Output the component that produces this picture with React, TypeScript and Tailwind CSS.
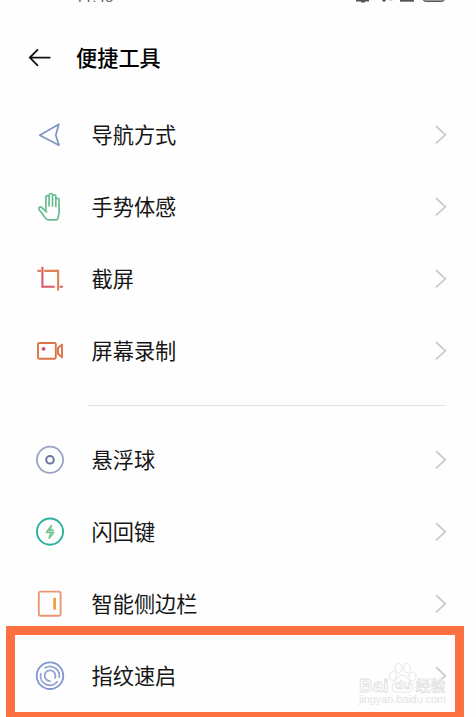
import type { ReactNode } from 'react';

interface Item {
  label: string;
  icon: ReactNode;
}

function NavigationIcon() {
  return (
    <svg className="h-8 w-8" viewBox="0 0 32 32" fill="none" stroke="#8496c6" strokeWidth="1.8" strokeLinejoin="round">
      <path d="M5.8 16.2 24.8 5.2 21.8 16.2 25 26.2Z" />
    </svg>
  );
}

function HandIcon() {
  return (
    <svg className="h-8 w-8" viewBox="0 0 32 32" fill="none" stroke="#67bd90" strokeWidth="1.7" strokeLinecap="round" strokeLinejoin="round">
      <path d="M11.9 20V6.3a1.6 1.6 0 0 1 3.2 0V15M15.1 15V4.2a1.7 1.7 0 0 1 3.4 0V15M18.5 15V5.4a1.6 1.6 0 0 1 3.3 0V15.5M21.8 15.5V9a1.6 1.6 0 0 1 3.3 0V21.5L24 27.2c-.3 1.2-.9 1.7-2 1.7h-7.4c-1.2 0-2-.4-2.8-1.4L5.2 18.8c-1.3-2 .8-3.7 2.5-2.3l5 4.3" />
    </svg>
  );
}

function CropIcon() {
  return (
    <svg className="h-8 w-8" viewBox="0 0 32 32" fill="none" strokeWidth="2.1">
      <path d="M3.4 7.9H7M10.2 7.9h13.9v19.6" stroke="#e28055" />
      <path d="M8.4 3.8v19.9h12.4M25.6 23.7h3.2" stroke="#d95a68" />
    </svg>
  );
}

function RecordIcon() {
  return (
    <svg className="h-8 w-8" viewBox="0 0 32 32" fill="none" stroke="#dc7448" strokeWidth="1.9" strokeLinejoin="round">
      <rect x="4" y="8" width="17.8" height="15.8" rx="1.2" />
      <path d="M28 9.6v12.6l-4-3.4v-5.8Z" />
      <circle cx="9.6" cy="13.8" r="1.9" fill="#d44e61" stroke="none" />
    </svg>
  );
}

function BallIcon() {
  return (
    <svg className="h-8 w-8" viewBox="0 0 32 32" fill="none">
      <circle cx="16" cy="15.8" r="13.1" stroke="#9ba5c4" strokeWidth="1.8" />
      <circle cx="16" cy="15.8" r="3.8" stroke="#68779e" strokeWidth="2" />
    </svg>
  );
}

function FlashIcon() {
  return (
    <svg className="h-8 w-8" viewBox="0 0 32 32" fill="none" strokeLinejoin="round">
      <circle cx="16" cy="15.6" r="13.1" stroke="#29b39c" strokeWidth="1.9" />
      <path d="M17.6 9.2 12.4 16.4h7.2L15 22.4M19.8 14.2h-4.4" stroke="#78c293" strokeWidth="1.7" />
      <path d="m17.6 9.2-1.8 6M16.8 16.4 15 22.4" stroke="#78c293" strokeWidth="1.4" />
    </svg>
  );
}

function SidebarIcon() {
  return (
    <svg className="h-8 w-8" viewBox="0 0 32 32" fill="none">
      <rect x="4.8" y="3.6" width="21.8" height="24.2" rx="1.8" stroke="#eb9773" strokeWidth="1.9" />
      <path d="M20.6 9.8v11.8" stroke="#eda13e" strokeWidth="2.7" />
    </svg>
  );
}

function FingerprintIcon() {
  return (
    <svg className="h-8 w-8" viewBox="0 0 32 32" fill="none" stroke="#8298cd" strokeWidth="1.8" strokeLinecap="round">
      <circle cx="16" cy="15.7" r="13.3" />
      <path d="M11.2 7.7a9.4 9.4 0 0 1 14 9.5M23.2 21.8A9.4 9.4 0 0 1 6.7 14" stroke="#91a4d3" />
      <path d="M16 21.1a5.4 5.4 0 1 1 5.3-4.2M16.6 10.3a5.4 5.4 0 0 1 4.4 7.6" stroke="#91a4d3" />
    </svg>
  );
}

const toolItems: Item[] = [
  { label: '导航方式', icon: <NavigationIcon /> },
  { label: '手势体感', icon: <HandIcon /> },
  { label: '截屏', icon: <CropIcon /> },
  { label: '屏幕录制', icon: <RecordIcon /> },
];

const quickItems: Item[] = [
  { label: '悬浮球', icon: <BallIcon /> },
  { label: '闪回键', icon: <FlashIcon /> },
  { label: '智能侧边栏', icon: <SidebarIcon /> },
  { label: '指纹速启', icon: <FingerprintIcon /> },
];

function SettingRow({ label, icon }: Item) {
  return (
    <li className="flex h-[72px] items-center pr-[29px] pl-[34px]">
      {icon}
      <span className="ml-[25.5px] flex-1 pb-0.5 text-[21.2px] leading-8 whitespace-nowrap">{label}</span>
      <svg className="h-6 w-3" viewBox="0 0 12 24" fill="none" stroke="#c9c9c9" strokeWidth="1.7">
        <path d="M1 3.2 10.3 11.8 1 20.4" />
      </svg>
    </li>
  );
}

function StatusBar() {
  return (
    <div className="flex h-4 justify-between overflow-hidden pr-[31px] pl-[75px]">
      <span className="-mt-[13px] font-['Roboto',sans-serif] text-[15.5px] leading-5 text-[#666]">11:43</span>
      <svg className="h-4 w-[90px]" viewBox="0 0 90 16" fill="none">
        <path d="M1 .5h13" stroke="#555" strokeWidth="2" />
        <path d="M6 1.5h4" stroke="#555" strokeWidth="2" />
        <path d="M29 0v1.5" stroke="#444" strokeWidth="3" />
        <path d="M36 0v1" stroke="#ccc" strokeWidth="3" />
        <path d="M45 .7h14" stroke="#555" strokeWidth="2" />
        <rect x="68" y="-10" width="21.5" height="11.5" rx="3" fill="#999" stroke="#555" />
      </svg>
    </div>
  );
}

function Watermark() {
  return (
    <div className="absolute top-[662px] left-[356px] w-[96px]">
      <svg className="h-[32px] w-[96px]" viewBox="0 0 96 32" fill="#fff" stroke="#dedede" strokeWidth=".8">
        <ellipse cx="37" cy="14" rx="3.4" ry="4.4" />
        <ellipse cx="42.5" cy="6.3" rx="3.4" ry="4.8" />
        <ellipse cx="51" cy="6.3" rx="3.4" ry="4.8" />
        <ellipse cx="56.5" cy="14.5" rx="3.4" ry="4.4" />
        <path d="M46.5 13c-4 0-5 4-8 7s-4 10 2 10h12c6 0 5-7 2-10s-4-7-8-7Z" />
        <g className="font-['Liberation_Sans','Noto_Sans_CJK_SC',sans-serif]">
          <text x="3" y="29.5" fontSize="19" fontWeight="700">Bai</text>
          <text x="39" y="27" fontSize="13" fontWeight="700" strokeWidth=".7">du</text>
          <text x="59.5" y="28.5" fontSize="15" fontWeight="500" fill="#f4f4f4" strokeWidth=".6">经验</text>
        </g>
      </svg>
      <p className="pl-[3px] font-['Liberation_Sans',sans-serif] text-[10.8px] leading-[10px] whitespace-nowrap text-[#e3e3e3]">jingyan.baidu.com</p>
    </div>
  );
}

export default function App() {
  return (
    <div className="relative h-[717px] w-[476px] overflow-hidden bg-[#fefefe] font-['Noto_Sans_CJK_SC',sans-serif] text-[#161616]">
      <StatusBar />

      <header className="flex h-[83px] items-center pl-[28px]">
        <svg className="h-6 w-6" viewBox="0 0 24 24" fill="none" stroke="#111" strokeWidth="1.8">
          <path d="M22.5 11.6H2M10 3.4 1.8 11.6l8.2 8.2" />
        </svg>
        <h1 className="ml-6 pb-0.5 text-[21.2px] leading-8 font-medium text-black">便捷工具</h1>
      </header>

      <ul>
        {toolItems.map((item) => (
          <SettingRow key={item.label} {...item} />
        ))}
      </ul>

      <hr className="mt-[18px] mr-[30px] mb-[18px] ml-[88px] border-[#e4e4e4]" />

      <ul>
        {quickItems.map((item) => (
          <SettingRow key={item.label} {...item} />
        ))}
      </ul>

      <Watermark />

      {/* Highlight around the last row */}
      <div className="absolute top-[626px] left-[6px] h-[95px] w-[458px] border-9 border-[#fc7042]" />
      <div className="absolute top-[712px] left-[6px] h-[5px] w-[458px] bg-[#fc7042]" />
    </div>
  );
}
